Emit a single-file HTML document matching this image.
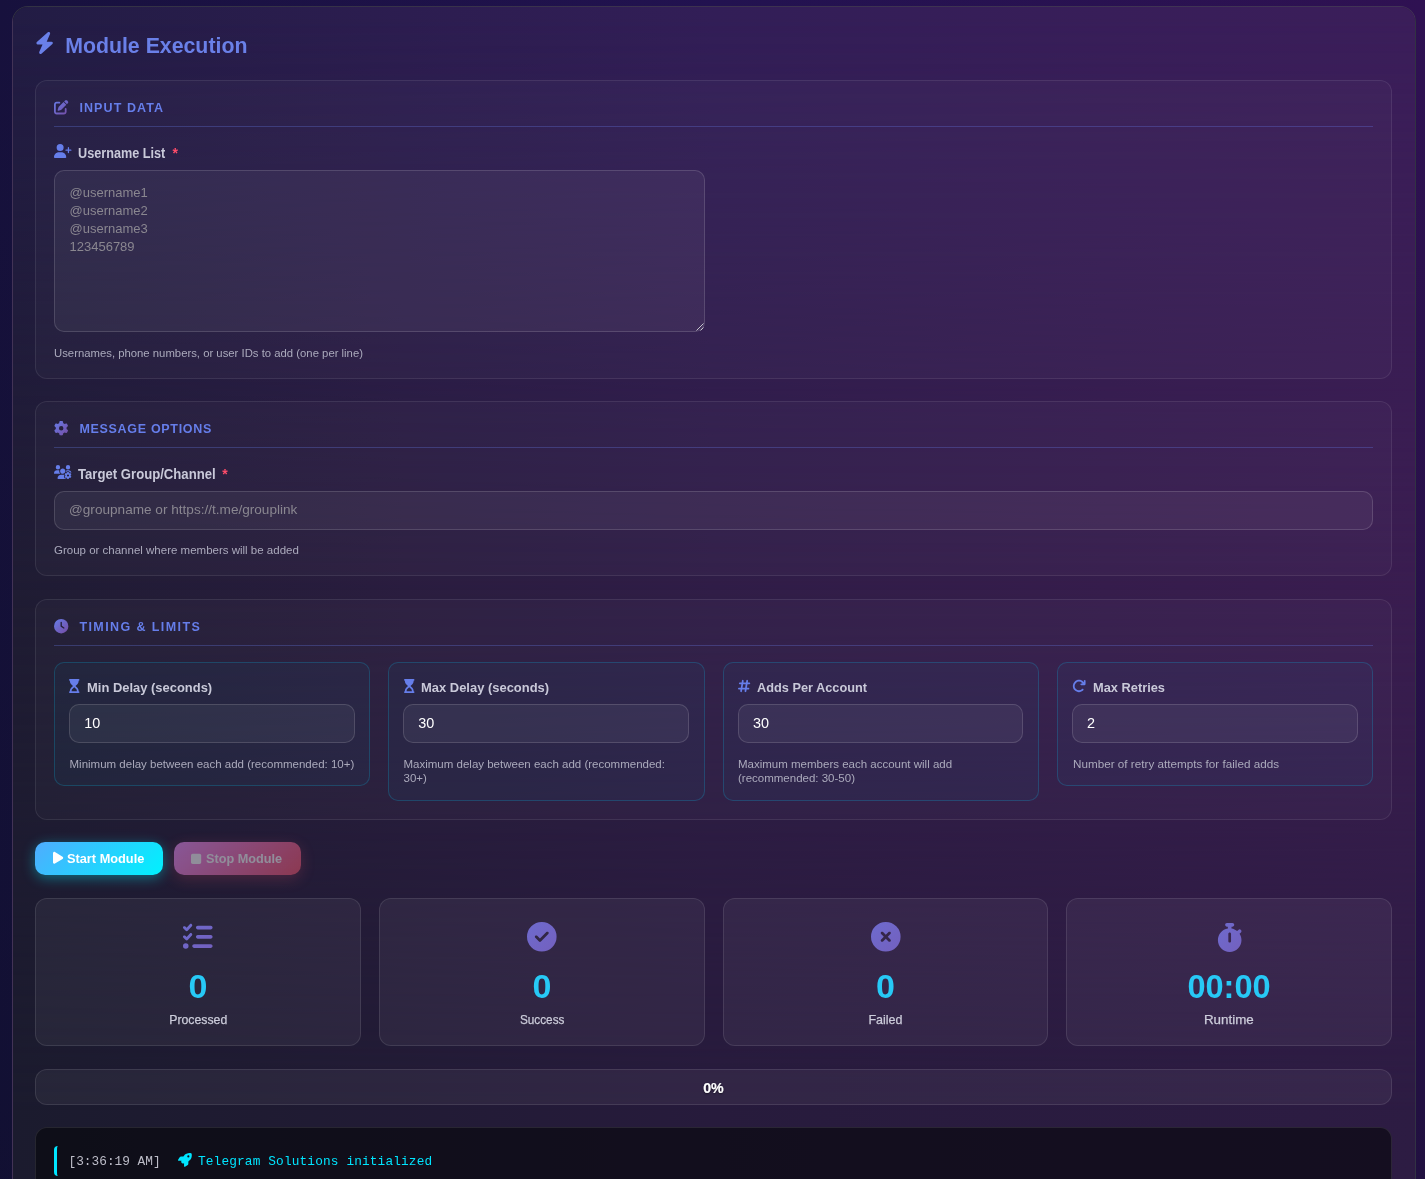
<!DOCTYPE html>
<html lang="en">
<head>
<meta charset="utf-8">
<title>Module Execution</title>
<style>
*{box-sizing:border-box;margin:0;padding:0}
html,body{width:1425px;height:1179px;overflow:hidden}
body{font-family:"Liberation Sans",sans-serif;color:#e0e0ea;position:relative;
 background:
  linear-gradient(to bottom,rgba(8,14,32,0) 0%,rgba(8,14,32,.36) 100%),
  linear-gradient(90deg,#17113d 0%,#221250 50%,#2f1152 100%);
}
svg{display:block;position:absolute}
.abs{position:absolute}
.card{position:absolute;left:12px;top:6px;width:1404px;height:1300px;border-radius:16px;overflow:hidden;
 background:linear-gradient(90deg,#1b1b2e 0%,#1f1b32 18%,#271b3c 50%,#2d1c43 100%);border:1px solid rgba(255,255,255,.10)}
.card i{position:absolute;left:0;top:0;width:100%;display:block}
.card .m{height:1104px;background:linear-gradient(90deg,#1f1c33 0%,#2a1d3f 28%,#301d47 50%,#361d4c 78%,#3a1d50 100%);
 -webkit-mask-image:linear-gradient(to bottom,#000 0,#000 584px,transparent 1104px);mask-image:linear-gradient(to bottom,#000 0,#000 584px,transparent 1104px)}
.card .u{height:584px;background:linear-gradient(90deg,#221c44 0%,#2c1d50 28%,#321e57 50%,#381e59 78%,#3b1e5a 100%);
 -webkit-mask-image:linear-gradient(to bottom,#000 0,#000 9px,transparent 584px);mask-image:linear-gradient(to bottom,#000 0,#000 9px,transparent 584px)}
.sec{position:absolute;left:35px;width:1357px;border-radius:12px;background:rgba(255,255,255,.025);border:1px solid rgba(255,255,255,.085)}
.t{position:absolute;white-space:nowrap;line-height:1;transform-origin:0 50%}
.c{text-align:center;transform-origin:50% 50%}
.h2{font-weight:bold;font-size:21.3px;color:#6a80e8}
.sh{font-weight:bold;font-size:12.5px;color:#667eea}
.hr{position:absolute;left:54px;width:1319px;height:1px;background:rgba(102,126,234,.3)}
.lb{font-weight:bold;font-size:14px;color:#c9c9d9}
.lb2{font-weight:bold;font-size:13.5px;color:#c9c9d9}
.req{color:#ff4d6a;font-weight:bold;font-size:14px}
.help{font-size:11.5px;color:#abaabc}
.inp{position:absolute;border-radius:10px;background:rgba(255,255,255,.05);border:1px solid rgba(255,255,255,.14)}
.ph{font-size:13px;color:#8a8790}
.tc{position:absolute;border-radius:10px;background:rgba(0,212,255,.03);border:1px solid rgba(0,212,255,.2)}
.val{font-size:14.4px;color:#fff}
.btn{position:absolute;top:842px;height:33px;border-radius:10px;border:0;padding:0;display:block;font:inherit;color:inherit;text-align:left}
.bt{font-weight:bold;font-size:13.6px;color:#fff;display:block}
.st{position:absolute;top:898px;height:148px;width:326px;border-radius:12px;background:rgba(255,255,255,.05);border:1px solid rgba(255,255,255,.1)}
.num{font-weight:bold;font-size:33px;color:#27c9f6;top:969.9px}
.sl{font-size:12.8px;color:#ccccda;top:1013.8px;-webkit-text-stroke:.25px #ccccda}
.mono{font-family:"Liberation Mono",monospace;font-size:12.8px;top:1155.9px}
</style>
</head>
<body>
<svg width="0" height="0" style="left:0;top:0"><defs><linearGradient id="g1" x1="0" y1="0" x2="1" y2="1"><stop offset="0" stop-color="#667eea"/><stop offset="1" stop-color="#764ba2"/></linearGradient><linearGradient id="g2" x1="0" y1="0" x2="1" y2="1"><stop offset="0" stop-color="#6e6bce"/><stop offset="1" stop-color="#7360be"/></linearGradient></defs></svg>
<div class="card"><i class="m"></i><i class="u"></i></div>
<div id="fg" style="position:absolute;left:0;top:0;width:1425px;height:1179px;will-change:transform">

<!-- title -->
<svg style="left:34.6px;top:32px" width="19.25" height="22.00" viewBox="0 0 448 512" overflow="visible"><path fill="#6a80e8" d="M349.4 44.6c5.9-13.7 1.5-29.7-10.6-38.5s-28.6-8-39.9 1.800l-256 224c-10 8.800-13.600 22.900-8.900 35.300S50.700 288 64 288H175.500L98.600 467.400c-5.900 13.700-1.500 29.700 10.600 38.500s28.600 8 39.900-1.800l256-224c10-8.800 13.600-22.900 8.900-35.300s-16.600-20.700-30-20.700H272.500L349.400 44.600z"/></svg>
<h2 class="t h2" id="title" style="left:65.2px;top:35.5px">Module Execution</h2>

<!-- SECTION 1 -->
<div class="sec" style="top:80px;height:299px"></div>
<svg style="left:54px;top:99.8px" width="14.40" height="14.40" viewBox="0 0 512 512" overflow="visible"><path fill="url(#g1)" d="M471.600 21.700c-21.900-21.900-57.300-21.900-79.200 0L362.300 51.700l97.900 97.900 30.100-30.100c21.900-21.900 21.900-57.300 0-79.200L471.600 21.700zm-299.200 220c-6.100 6.100-10.800 13.600-13.500 21.900l-29.600 88.800c-2.900 8.600-.6 18.100 5.800 24.600s15.900 8.700 24.600 5.800l88.800-29.600c8.200-2.700 15.700-7.400 21.900-13.500L437.700 172.300 339.700 74.300 172.400 241.700zM96 64C43 64 0 107 0 160V416c0 53 43 96 96 96H352c53 0 96-43 96-96V320c0-17.700-14.300-32-32-32s-32 14.300-32 32v96c0 17.700-14.300 32-32 32H96c-17.700 0-32-14.300-32-32V160c0-17.700 14.300-32 32-32h96c17.700 0 32-14.300 32-32s-14.300-32-32-32H96z"/></svg>
<h3 class="t sh" id="sh1" style="left:79.4px;top:102.0px;letter-spacing:1.1px">INPUT DATA</h3>
<div class="hr" style="top:126px"></div>
<svg style="left:54px;top:144px" width="17.50" height="14.00" viewBox="0 0 640 512" overflow="visible"><path fill="#667eea" d="M96 128a128 128 0 1 1 256 0A128 128 0 1 1 96 128zM0 482.3C0 383.800 79.800 304 178.300 304h91.400C368.200 304 448 383.800 448 482.300c0 16.400-13.300 29.700-29.700 29.700H29.700C13.300 512 0 498.700 0 482.300zM504 312V248H440c-13.300 0-24-10.700-24-24s10.700-24 24-24h64V136c0-13.300 10.700-24 24-24s24 10.700 24 24v64h64c13.300 0 24 10.700 24 24s-10.700 24-24 24H552v64c0 13.300-10.700 24-24 24s-24-10.700-24-24z"/></svg>
<label class="t lb" id="lb1" style="transform:scaleX(0.905);left:78px;top:146px">Username List</label>
<div class="t req" style="left:172.6px;top:145.7px">*</div>
<div class="inp" style="left:54px;top:170px;width:651px;height:162px"></div>
<div class="t ph" style="left:69.5px;top:186px">@username1</div>
<div class="t ph" style="left:69.5px;top:204px">@username2</div>
<div class="t ph" style="left:69.5px;top:222px">@username3</div>
<div class="t ph" style="left:69.5px;top:240px">123456789</div>
<svg style="left:696px;top:323px" width="8" height="8" viewBox="0 0 8 8"><path d="M7.500 .5L.5 7.500M7.500 4.500L4.500 7.500" stroke="#c4c4cc" stroke-width="1" fill="none"/></svg>
<div class="t help" id="help1" style="transform:scaleX(0.9845);left:54px;top:348.2px">Usernames, phone numbers, or user IDs to add (one per line)</div>

<!-- SECTION 2 -->
<div class="sec" style="top:401px;height:175px"></div>
<svg style="left:54px;top:420.9px" width="14.40" height="14.40" viewBox="0 0 512 512" overflow="visible"><path fill="url(#g1)" d="M495.900 166.600c3.200 8.700 .5 18.400-6.400 24.600l-43.300 39.400c1.100 8.300 1.700 16.800 1.700 25.400s-.6 17.100-1.700 25.400l43.300 39.400c6.900 6.200 9.600 15.900 6.400 24.600c-4.400 11.900-9.700 23.300-15.800 34.300l-4.700 8.100c-6.600 11-14 21.400-22.100 31.200c-5.900 7.200-15.700 9.600-24.500 6.800l-55.700-17.700c-13.400 10.300-28.200 18.900-44 25.400l-12.500 57.100c-2 9.100-9 16.300-18.200 17.800c-13.800 2.300-28 3.500-42.500 3.500s-28.700-1.200-42.500-3.500c-9.200-1.500-16.200-8.700-18.200-17.800l-12.500-57.100c-15.800-6.500-30.600-15.100-44-25.400L83.100 425.900c-8.800 2.800-18.600 .3-24.500-6.800c-8.100-9.800-15.500-20.200-22.100-31.200l-4.700-8.100c-6.100-11-11.400-22.400-15.800-34.300c-3.200-8.700-.5-18.400 6.400-24.600l43.300-39.400C64.600 273.100 64 264.600 64 256s.6-17.100 1.700-25.400L22.400 191.200c-6.900-6.200-9.600-15.900-6.400-24.600c4.400-11.900 9.700-23.300 15.800-34.300l4.700-8.100c6.600-11 14-21.400 22.100-31.200c5.900-7.200 15.700-9.600 24.500-6.800l55.700 17.700c13.400-10.300 28.200-18.900 44-25.400l12.500-57.100c2-9.100 9-16.300 18.200-17.800C227.300 1.200 241.500 0 256 0s28.700 1.200 42.500 3.500c9.200 1.500 16.200 8.700 18.200 17.800l12.500 57.100c15.800 6.500 30.600 15.100 44 25.400l55.700-17.700c8.800-2.800 18.600-.3 24.500 6.800c8.100 9.800 15.500 20.200 22.100 31.200l4.700 8.100c6.100 11 11.400 22.400 15.800 34.300zM256 336a80 80 0 1 0 0-160 80 80 0 1 0 0 160z"/></svg>
<h3 class="t sh" id="sh2" style="left:79.4px;top:423.1px;letter-spacing:.69px">MESSAGE OPTIONS</h3>
<div class="hr" style="top:447px"></div>
<svg style="left:54px;top:465.2px" width="17.50" height="14.00" viewBox="0 0 640 512" overflow="visible"><path fill="#667eea" d="M144 160A80 80 0 1 0 144 0a80 80 0 1 0 0 160zm368 0A80 80 0 1 0 512 0a80 80 0 1 0 0 160zM0 298.700C0 310.400 9.600 320 21.300 320H234.700c.2 0 .4 0 .7 0c-26.600-23.500-43.300-57.800-43.300-96c0-7.600 .7-15 1.900-22.300c-13.600-6.300-28.700-9.700-44.600-9.700H106.700C47.800 192 0 239.800 0 298.700zM320 320c24 0 45.900-8.800 62.700-23.300c2.500-3.700 5.200-7.300 8-10.700c2.700-3.300 5.700-6.100 9-8.300C410 262.300 416 243.900 416 224c0-53-43-96-96-96s-96 43-96 96s43 96 96 96zm65.400 60.200c-10.300-5.900-18.100-16.200-20.800-28.200H261.300C187.700 352 128 411.700 128 485.300c0 14.700 11.900 26.700 26.700 26.700H455.200c-2.100-5.200-3.200-10.900-3.200-16.400v-3c-1.300-.7-2.700-1.500-4-2.300l-2.600 1.500c-16.800 9.700-40.500 8-54.700-9.700c-4.500-5.600-8.600-11.500-12.400-17.600l-.1-.2-.1-.2-2.400-4.100-.1-.2-.1-.2c-3.400-6.200-6.400-12.600-9-19.300c-8.200-21.200 2.200-42.600 19-52.300l2.700-1.500c0-.8 0-1.500 0-2.300s0-1.500 0-2.300l-2.700-1.500zM533.300 192H490.700c-15.900 0-31 3.500-44.600 9.700c1.300 7.200 1.900 14.700 1.900 22.300c0 17.400-3.500 33.900-9.700 49c2.500 .9 4.900 2 7.100 3.300l2.600 1.500c1.300-.8 2.600-1.600 4-2.300v-3c0-19.400 13.300-39.100 35.800-42.600c7.900-1.200 16-1.900 24.200-1.900s16.300 .6 24.200 1.900c22.500 3.500 35.800 23.200 35.800 42.600v3c1.300 .7 2.700 1.500 4 2.300l2.600-1.500c16.800-9.700 40.500-8 54.700 9.700c2.300 2.800 4.500 5.800 6.600 8.700c-2.100-57.100-49-102.700-106.600-102.700zm91.300 163.900c6.300-3.600 9.500-11.100 6.800-18c-2.100-5.500-4.600-10.800-7.400-15.900l-2.300-4c-3.100-5.100-6.500-9.900-10.200-14.500c-4.600-5.700-12.700-6.700-19-3l-2.900 1.700c-9.200 5.300-20.400 4-29.600-1.300s-16.100-14.500-16.100-25.100v-3.400c0-7.300-4.900-13.800-12.100-14.900c-6.500-1-13.100-1.500-19.900-1.500s-13.400 .5-19.900 1.500c-7.200 1.100-12.100 7.600-12.100 14.900v3.400c0 10.600-6.900 19.800-16.100 25.100s-20.400 6.600-29.600 1.300l-2.900-1.700c-6.300-3.600-14.400-2.600-19 3c-3.700 4.600-7.100 9.500-10.200 14.600l-2.300 3.900c-2.800 5.100-5.300 10.400-7.400 15.900c-2.600 6.800 .5 14.300 6.800 17.900l2.900 1.700c9.200 5.300 13.700 15.800 13.700 26.400s-4.500 21.100-13.700 26.400l-3 1.700c-6.300 3.600-9.500 11.100-6.800 17.900c2.100 5.500 4.600 10.700 7.400 15.800l2.400 4.100c3 5.100 6.400 9.900 10.100 14.500c4.600 5.700 12.700 6.700 19 3l2.900-1.700c9.200-5.300 20.400-4 29.600 1.300s16.100 14.500 16.100 25.100v3.400c0 7.300 4.900 13.800 12.100 14.900c6.500 1 13.100 1.500 19.900 1.500s13.400-.5 19.900-1.500c7.200-1.100 12.100-7.600 12.100-14.900v-3.400c0-10.600 6.900-19.800 16.100-25.100s20.400-6.600 29.600-1.300l2.900 1.700c6.300 3.600 14.400 2.600 19-3c3.700-4.600 7.100-9.400 10.100-14.500l2.400-4.200c2.800-5.100 5.300-10.300 7.400-15.800c2.600-6.800-.5-14.300-6.800-17.900l-3-1.700c-9.200-5.300-13.700-15.800-13.700-26.400s4.500-21.100 13.700-26.400l3-1.700zM472 384a40 40 0 1 1 80 0 40 40 0 1 1 -80 0z"/></svg>
<label class="t lb" id="lb2" style="transform:scaleX(0.938);left:77.6px;top:467.1px">Target Group/Channel</label>
<div class="t req" style="left:222.3px;top:466.8px">*</div>
<div class="inp" style="left:54px;top:491px;width:1319px;height:39px"></div>
<div class="t ph" id="ph2" style="left:69px;top:503.3px;font-size:13.6px">@groupname or https://t.me/grouplink</div>
<div class="t help" id="help2" style="left:54px;top:544.9px">Group or channel where members will be added</div>

<!-- SECTION 3 -->
<div class="sec" style="top:599px;height:221px"></div>
<svg style="left:54px;top:619px" width="14.40" height="14.40" viewBox="0 0 512 512" overflow="visible"><path fill="url(#g1)" d="M256 0a256 256 0 1 1 0 512A256 256 0 1 1 256 0zM232 120V256c0 8 4 15.500 10.700 20l96 64c11 7.400 25.900 4.400 33.300-6.700s4.400-25.900-6.700-33.300L280 243.200V120c0-13.300-10.700-24-24-24s-24 10.700-24 24z"/></svg>
<h3 class="t sh" id="sh3" style="left:79.4px;top:621.0px;letter-spacing:1.41px">TIMING &amp; LIMITS</h3>
<div class="hr" style="top:645px"></div>

<div class="tc" style="left:54px;top:662px;width:316px;height:124px"></div>
<div class="tc" style="left:388px;top:662px;width:317px;height:139px"></div>
<div class="tc" style="left:723px;top:662px;width:316px;height:139px"></div>
<div class="tc" style="left:1057px;top:662px;width:316px;height:124px"></div>

<svg style="left:69.4px;top:679px" width="10.50" height="14.00" viewBox="0 0 384 512" overflow="visible"><path fill="#667eea" d="M32 0C14.3 0 0 14.3 0 32s14.3 32 32 32v11c0 42.4 16.9 83.1 46.9 113.1l67.9 67.9-67.9 67.9C48.9 353.9 32 394.6 32 437v11c-17.7 0-32 14.3-32 32s14.3 32 32 32h320c17.7 0 32-14.3 32-32s-14.3-32-32-32v-11c0-42.4-16.9-83.1-46.9-113.1L237.2 256l67.9-67.9c30-30 46.9-70.7 46.9-113.1V64c17.7 0 32-14.3 32-32S369.7 0 352 0zm256 437v11H96v-11c0-25.5 10.1-49.9 28.1-67.9l67.9-67.9 67.9 67.9c18 18 28.1 42.4 28.1 67.9"/></svg><svg style="left:403.8px;top:679px" width="10.50" height="14.00" viewBox="0 0 384 512" overflow="visible"><path fill="#667eea" d="M32 0C14.3 0 0 14.3 0 32s14.3 32 32 32v11c0 42.4 16.9 83.1 46.9 113.1l67.9 67.9-67.9 67.9C48.9 353.9 32 394.6 32 437v11c-17.7 0-32 14.3-32 32s14.3 32 32 32h320c17.7 0 32-14.3 32-32s-14.3-32-32-32v-11c0-42.4-16.9-83.1-46.9-113.1L237.2 256l67.9-67.9c30-30 46.9-70.7 46.9-113.1V64c17.7 0 32-14.3 32-32S369.7 0 352 0zm256 437v11H96v-11c0-25.5 10.1-49.9 28.1-67.9l67.9-67.9 67.9 67.9c18 18 28.1 42.4 28.1 67.9"/></svg><svg style="left:738.2px;top:679.2px" width="12.25" height="14.00" viewBox="0 0 448 512" overflow="visible"><path fill="#667eea" d="M181.3 32.400c17.400 2.900 29.200 19.400 26.300 36.800L197.800 128h95.100l11.500-69.300c2.900-17.400 19.400-29.200 36.800-26.300s29.200 19.400 26.300 36.800L357.800 128H416c17.700 0 32 14.300 32 32s-14.300 32-32 32H347.100L325.800 320H384c17.700 0 32 14.300 32 32s-14.300 32-32 32H315.100l-11.500 69.300c-2.900 17.400-19.400 29.200-36.800 26.300s-29.200-19.400-26.300-36.800l9.800-58.700H155.100l-11.500 69.300c-2.900 17.400-19.400 29.200-36.800 26.300s-29.200-19.400-26.300-36.800L90.200 384H32c-17.700 0-32-14.300-32-32s14.300-32 32-32h68.900l21.300-128H64c-17.700 0-32-14.300-32-32s14.300-32 32-32h68.900l11.500-69.300c2.900-17.400 19.400-29.200 36.800-26.300zM187.100 192L165.800 320h95.100l21.300-128H187.100z"/></svg><svg style="left:1072px;top:679px" width="14.00" height="14.00" viewBox="0 0 512 512" overflow="visible"><path fill="#667eea" d="M386.300 160H336c-17.700 0-32 14.300-32 32s14.300 32 32 32H464c17.700 0 32-14.300 32-32V64c0-17.700-14.300-32-32-32s-32 14.300-32 32v51.200L414.400 97.600c-87.500-87.500-229.300-87.500-316.800 0s-87.500 229.300 0 316.800s229.300 87.500 316.800 0c12.500-12.500 12.500-32.800 0-45.300s-32.800-12.500-45.300 0c-62.500 62.500-163.800 62.500-226.300 0s-62.500-163.800 0-226.300s163.800-62.500 226.300 0L386.300 160z"/></svg>
<label class="t lb2" id="tl1" style="transform:scaleX(0.959);left:86.7px;top:681.1px">Min Delay (seconds)</label>
<label class="t lb2" id="tl2" style="transform:scaleX(0.959);left:420.7px;top:681.1px">Max Delay (seconds)</label>
<label class="t lb2" id="tl3" style="transform:scaleX(0.944);left:757px;top:681.1px">Adds Per Account</label>
<label class="t lb2" id="tl4" style="transform:scaleX(0.95);left:1093.2px;top:681.1px">Max Retries</label>

<div class="inp" style="left:69px;top:704px;width:286px;height:39px"></div>
<div class="inp" style="left:403px;top:704px;width:286px;height:39px"></div>
<div class="inp" style="left:738px;top:704px;width:285px;height:39px"></div>
<div class="inp" style="left:1072px;top:704px;width:286px;height:39px"></div>
<div class="t val" style="left:84.3px;top:716.2px">10</div>
<div class="t val" style="left:418.3px;top:716.2px">30</div>
<div class="t val" style="left:753px;top:716.2px">30</div>
<div class="t val" style="left:1087px;top:716.2px">2</div>

<div class="t help" id="th1" style="left:69.5px;top:758.7px">Minimum delay between each add (recommended: 10+)</div>
<div class="t help" id="th2a" style="left:403.5px;top:758.7px">Maximum delay between each add (recommended:</div>
<div class="t help" id="th2b" style="left:403.5px;top:773.1px">30+)</div>
<div class="t help" id="th3a" style="left:738px;top:758.7px">Maximum members each account will add</div>
<div class="t help" id="th3b" style="left:738px;top:773.1px">(recommended: 30-50)</div>
<div class="t help" id="th4" style="transform:scaleX(1.017);left:1072.5px;top:758.7px">Number of retry attempts for failed adds</div>

<!-- BUTTONS -->
<button class="btn" style="left:35px;width:128px;background:linear-gradient(135deg,#4facfe,#00f2fe);box-shadow:0 3px 13px rgba(0,242,254,.38)">
<svg style="left:17.7px;top:9.4px" width="10.20" height="13.60" viewBox="0 0 384 512" overflow="visible"><path fill="#fff" d="M73 39c-14.800-9.100-33.400-9.400-48.500-.9S0 62.600 0 80V432c0 17.400 9.400 33.400 24.500 41.900s33.700 8.100 48.500-.9L361 297c14.300-8.700 23-24.200 23-41s-8.700-32.200-23-41L73 39z"/></svg>
<span class="t bt" id="b1" style="transform:scaleX(0.939);left:32.3px;top:9.9px">Start Module</span>
</button>
<button class="btn" disabled style="left:174px;width:127px;background:linear-gradient(135deg,#f093fb,#f5576c);opacity:.5;box-shadow:0 4px 15px rgba(245,87,108,.4)">
<svg style="left:17.2px;top:9.5px" width="10.20" height="13.60" viewBox="0 0 384 512" overflow="visible"><path fill="#fff" d="M0 128C0 92.700 28.700 64 64 64H320c35.300 0 64 28.700 64 64V384c0 35.300-28.700 64-64 64H64c-35.300 0-64-28.700-64-64V128z"/></svg>
<span class="t bt" id="b2" style="transform:scaleX(0.933);left:32px;top:9.9px">Stop Module</span>
</button>

<!-- STATS -->
<div class="st" style="left:35px"></div>
<div class="st" style="left:379px"></div>
<div class="st" style="left:723px;width:325px"></div>
<div class="st" style="left:1066px"></div>
<svg style="left:183.2px;top:922.4px" width="29.60" height="29.60" viewBox="0 0 512 512" overflow="visible"><path fill="url(#g2)" d="M152.1 38.200c9.900 8.900 10.700 24 1.800 33.900l-72 80c-4.400 4.900-10.600 7.800-17.200 7.900s-12.900-2.400-17.600-7L7 113C-2.300 103.600-2.300 88.400 7 79s24.600-9.400 33.900 0l22.100 22.100 55.100-61.200c8.900-9.900 24-10.700 33.900-1.800zm0 160c9.900 8.900 10.700 24 1.800 33.900l-72 80c-4.400 4.900-10.600 7.800-17.200 7.900s-12.900-2.400-17.600-7L7 273c-9.400-9.400-9.400-24.600 0-33.900s24.600-9.400 33.900 0l22.100 22.100 55.100-61.200c8.900-9.900 24-10.700 33.900-1.800zM224 96c0-17.700 14.300-32 32-32H480c17.700 0 32 14.300 32 32s-14.300 32-32 32H256c-17.700 0-32-14.300-32-32zm0 160c0-17.700 14.300-32 32-32H480c17.700 0 32 14.300 32 32s-14.300 32-32 32H256c-17.700 0-32-14.300-32-32zM160 416c0-17.700 14.300-32 32-32H480c17.700 0 32 14.300 32 32s-14.300 32-32 32H192c-17.700 0-32-14.300-32-32zM48 368a48 48 0 1 1 0 96 48 48 0 1 1 0-96z"/></svg><svg style="left:527.2px;top:922.3px" width="29.60" height="29.60" viewBox="0 0 512 512" overflow="visible"><path fill="url(#g2)" d="M256 512A256 256 0 1 0 256 0a256 256 0 1 0 0 512zM369 209L241 337c-9.400 9.400-24.600 9.400-33.900 0l-64-64c-9.400-9.400-9.400-24.600 0-33.900s24.600-9.400 33.900 0l47 47L335 175c9.400-9.400 24.600-9.400 33.900 0s9.400 24.600 0 33.900z"/></svg><svg style="left:870.7px;top:922.3px" width="29.60" height="29.60" viewBox="0 0 512 512" overflow="visible"><path fill="url(#g2)" d="M256 512A256 256 0 1 0 256 0a256 256 0 1 0 0 512zM175 175c9.400-9.400 24.600-9.400 33.900 0l47 47 47-47c9.400-9.400 24.600-9.400 33.900 0s9.400 24.600 0 33.900l-47 47 47 47c9.400 9.400 9.400 24.600 0 33.900s-24.600 9.400-33.900 0l-47-47-47 47c-9.400 9.400-24.600 9.400-33.900 0s-9.400-24.600 0-33.900l47-47-47-47c-9.400-9.400-9.400-24.600 0-33.900z"/></svg><svg style="left:1216.6px;top:922.8px" width="25.38" height="29.00" viewBox="0 0 448 512" overflow="visible"><path fill="url(#g2)" d="M176 0c-17.700 0-32 14.300-32 32s14.300 32 32 32h16V98.400C92.300 113.800 16 200 16 304c0 114.900 93.100 208 208 208s208-93.100 208-208c0-41.800-12.300-80.700-33.500-113.200l24.100-24.100c12.500-12.500 12.500-32.800 0-45.300s-32.800-12.500-45.300 0L355.700 143c-28.100-23-62.200-38.800-99.700-44.600V64h16c17.700 0 32-14.300 32-32s-14.300-32-32-32H224 176zm72 192V320c0 13.300-10.700 24-24 24s-24-10.700-24-24V192c0-13.300 10.700-24 24-24s24 10.700 24 24z"/></svg>
<div class="t c num" style="transform:scaleX(1.03);left:35px;width:326px">0</div>
<div class="t c num" style="transform:scaleX(1.03);left:379px;width:326px">0</div>
<div class="t c num" style="transform:scaleX(1.03);left:723px;width:325px">0</div>
<div class="t c num" id="rt" style="transform:scaleX(0.985);left:1066px;width:326px">00:00</div>
<div class="t c sl" style="left:35px;width:326px"><span id="sl1" style="display:inline-block;transform:scaleX(0.96)">Processed</span></div>
<div class="t c sl" style="left:379px;width:326px"><span id="sl2" style="display:inline-block;transform:scaleX(0.918)">Success</span></div>
<div class="t c sl" style="left:723px;width:325px"><span id="sl3" style="display:inline-block;transform:scaleX(0.978)">Failed</span></div>
<div class="t c sl" style="left:1066px;width:326px"><span id="sl4" style="display:inline-block;transform:scaleX(1.045)">Runtime</span></div>

<!-- PROGRESS -->
<div class="abs" style="left:35px;top:1069px;width:1357px;height:36px;border-radius:12px;background:rgba(255,255,255,.05);border:1px solid rgba(255,255,255,.1)"></div>
<div class="t c" style="left:35px;width:1357px;top:1080.8px;font-weight:bold;font-size:14.2px;color:#fff;-webkit-text-stroke:.2px #fff;text-shadow:0 1px 2px rgba(0,0,0,.5)">0%</div>

<!-- LOG -->
<div class="abs" style="left:35px;top:1127px;width:1357px;height:121px;border-radius:12px;background:rgba(6,6,12,.62);border:1px solid rgba(255,255,255,.1)"></div>
<div class="abs" style="left:54px;top:1146px;width:1319px;height:30px;border-left:3px solid #00e5ff;border-radius:4px"></div>
<div class="t mono" id="lg1" style="left:68.5px;color:#bdbdc8">[3:36:19 AM]</div>
<svg style="left:177.6px;top:1153.2px" width="13.80" height="13.80" viewBox="0 0 512 512" overflow="visible"><path fill="#00e5ff" d="M156.600 384.900L125.700 354c-8.500-8.500-11.500-20.800-7.700-32.200c3-8.900 7-20.500 11.800-33.800L24 288c-8.600 0-16.600-4.600-20.900-12.100s-4.200-16.700 .2-24.100l52.500-88.500c13-21.900 36.500-35.300 61.900-35.300l82.300 0c2.400-4 4.800-7.700 7.200-11.300C289.100-4.100 411.100-8.100 483.900 5.300c11.600 2.100 20.600 11.200 22.800 22.800c13.400 72.900 9.300 194.800-111.400 276.700c-3.500 2.400-7.300 4.800-11.300 7.200v82.300c0 25.400-13.400 49-35.300 61.900l-88.500 52.500c-7.400 4.400-16.600 4.500-24.100 .2s-12.100-12.200-12.100-20.900V380.800c-14.100 4.900-26.400 8.900-35.700 11.900c-11.200 3.600-23.400 .5-31.800-7.800zM384 168a40 40 0 1 0 0-80 40 40 0 1 0 0 80z"/></svg>
<div class="t mono" id="lg2" style="left:198px;letter-spacing:.13px;color:#00e5ff">Telegram Solutions initialized</div>
</div>
</body>
</html>
